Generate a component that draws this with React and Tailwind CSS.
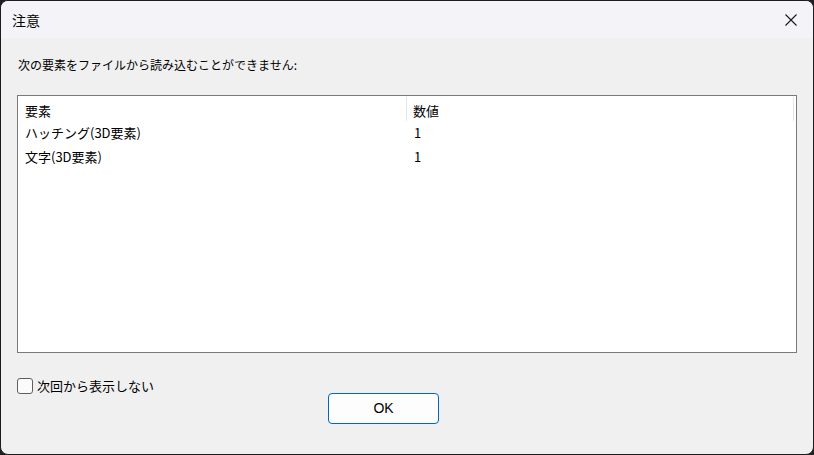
import React, { useState } from 'react'

const font = { fontFamily: '"Noto Sans CJK JP", "Liberation Sans", sans-serif' }

const rows = [
  { name: 'ハッチング(3D要素)', value: '1' },
  { name: '文字(3D要素)', value: '1' },
]

const App = () => {
  const [hide, setHide] = useState(false)

  return (
    <div className="w-[814px] h-[455px] bg-[#202020]" style={font}>
      <div className="w-full h-full rounded-[8px] border border-[#1c1c1c] bg-[#f0f0f0] overflow-hidden flex flex-col text-[#000]">
        {/* Title bar */}
        <div className="h-[37px] bg-[#f3f3f8] flex items-center justify-between shrink-0">
          <span className="pl-[11px] text-[14px] leading-none">注意</span>
          <div className="w-[46px] h-full flex items-center justify-center mr-[-1px]">
            <svg width="12" height="12" viewBox="0 0 12 12">
              <path d="M0.5 0.5 L11.5 11.5 M11.5 0.5 L0.5 11.5" stroke="#1a1a1a" strokeWidth="1.1" fill="none" />
            </svg>
          </div>
        </div>

        {/* Body */}
        <div className="flex-1 flex flex-col px-[16px]">
          <p className="mt-[19px] ml-[1px] text-[12px] leading-[16px]">次の要素をファイルから読み込むことができません:</p>

          <div className="mt-[22px] h-[258px] border border-[#7a7a7a] bg-white">
            <div className="grid grid-cols-[389px_1fr] h-[25px] text-[13px]">
              <div className="pl-[7px] border-r border-[#e5e5e5] mt-[1px] h-[24px] flex items-center pt-[4px]">要素</div>
              <div className="pl-[6px] border-r border-[#e5e5e5] mt-[1px] h-[24px] flex items-center pt-[4px] mr-[2px]">数値</div>
            </div>
            {rows.map((r) => (
              <div key={r.name} className="grid grid-cols-[389px_1fr] h-[24px] items-center text-[13px]">
                <div className="pl-[7px]">{r.name}</div>
                <div className="pl-[7px]">{r.value}</div>
              </div>
            ))}
          </div>

          <div className="flex mt-[23px]">
            <label className="flex items-center gap-[4px] text-[13px] cursor-pointer select-none">
              <span
                onClick={() => setHide(!hide)}
                className="w-[16px] h-[16px] rounded-[3px] border border-[#5f5f5f] bg-[#fbfbfb] flex items-center justify-center"
              >
                {hide && <span className="text-[10px]">✓</span>}
              </span>
              <span>次回から表示しない</span>
            </label>
          </div>

          <div className="flex mt-[-3px]">
            <button className="ml-[311px] w-[111px] h-[31px] rounded-[4px] border border-[#0067c0] bg-[#fdfdfd] text-[14px]" style={{ fontFamily: '"Liberation Sans", sans-serif' }}>
              OK
            </button>
          </div>
        </div>
      </div>
    </div>
  )
}

export default App
